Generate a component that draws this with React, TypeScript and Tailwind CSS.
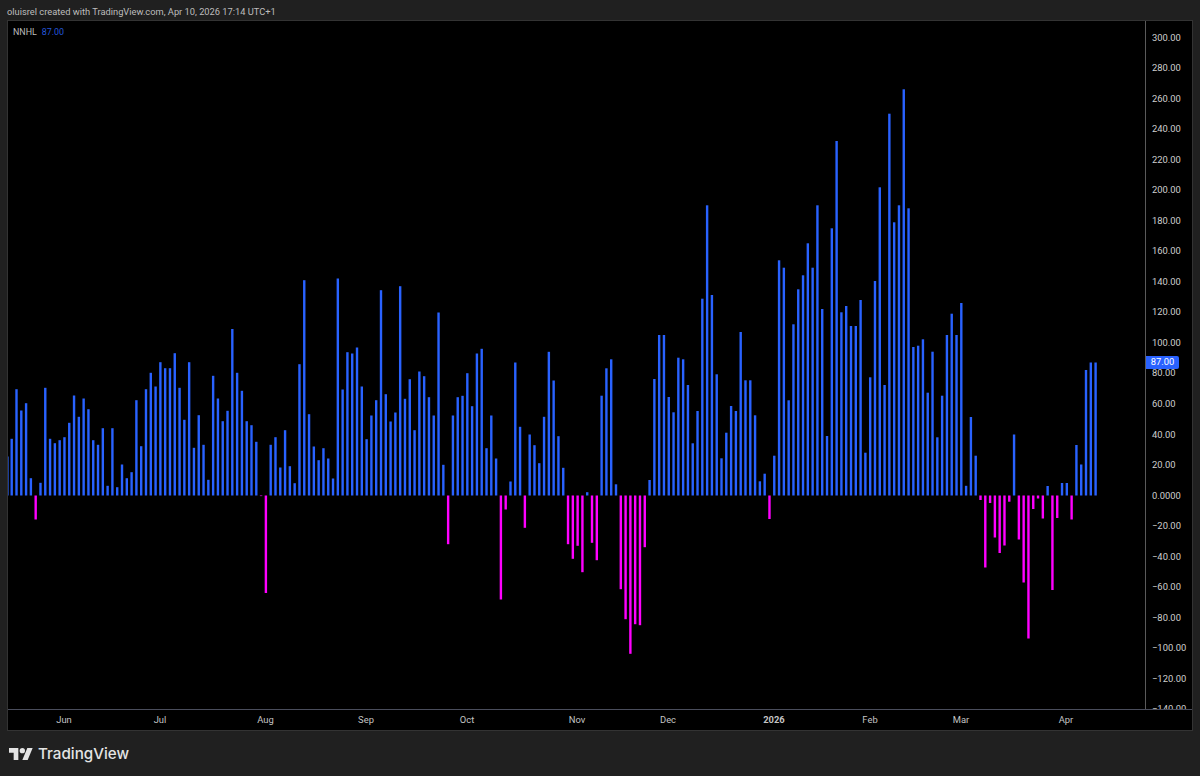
import React from 'react';

// bar heights in px from the zero line, left to right (negative = below zero)
const bars = [
  56.7, 106.3, 85, 92.3, 17.3, -24, 12.7, 107.7, 56.7, 52.3, 55.3, 58.3, 72.7, 100, 78.7, 97, 86.3, 55.3, 50.7, 67.3,
  9.7, 67.3, 8.3, 31, 17.3, 23.3, 95.3, 49.3, 106.3, 122.7, 109, 133.3, 127.3, 127.3, 142.3, 107.7, 75.7, 133.3, 47.7, 80.3,
  50.7, 15.7, 119.7, 97, 74.3, 84.7, 166.5, 122.7, 104.7, 74.3, 70.3, 53.7, -0.6, -97.5, 50.7, 58.3, 28, 65.3, 29.3, 12.3,
  131.3, 215.3, 81.3, 49, 35.3, 47.3, 37, 17, 217, 106, 143.3, 142, 148, 109, 56.3, 80, 95.3, 205.3, 101.3, 74,
  83, 209.3, 96.7, 116.3, 65.3, 124, 119.3, 98.3, 80, 183, 30.7, -48.7, 80, 98.3, 99.7, 122.3, 89.3, 142, 146.7, 47.3,
  80, 37, -104, -14, 14, 133, 68.7, -32.3, 61, 50.3, 32.3, 78.7, 143.7, 115, 59.3, 27.7, -48.7, -63.3, -50.3, -76.7,
  3.3, -47.3, -64.7, 99.8, 127.2, 136.2, 11.2, -93.7, -123.7, -158.3, -128.7, -129.7, -51.7, 15.5, 116.5, 160.5, 160.5, 98.5, 83.2, 137.8,
  136.2, 110.5, 52.2, 84.5, 196.8, 290.2, 200.5, 121.2, 37.2, 62.8, 89.5, 84.5, 163.5, 115.2, 115.2, 80.2, 14.2, 21.8, -23.5, 39.8,
  235.2, 227.8, 95.2, 171.2, 206.2, 220.2, 252.2, 227.8, 290.2, 186.5, 59.5, 267.2, 354.5, 183.2, 189.5, 169.5, 169.5, 195.5, 42.8, 118.2,
  214.5, 308.2, 110.5, 381.8, 273.2, 290.2, 406.2, 287.2, 148.5, 149.8, 156.2, 102.8, 143.8, 58.2, 99.8, 160.5, 181.8, 160.5, 192.5, 9.7,
  78.5, 39.8, -4.5, -72, -7.5, -42, -57.5, -50, -6.2, 61, -44, -87, -143, -13.5, -3, -23, 9.5, -94.5, -22.5, 12.5,
  12.5, -24, 50.5, 31, 125.5, 133, 133,
];

const prices = [
  '300.00', '280.00', '260.00', '240.00', '220.00', '200.00', '180.00', '160.00', '140.00', '120.00', '100.00', '80.00',
  '60.00', '40.00', '20.00', '0.0000', '−20.00', '−40.00', '−60.00', '−80.00', '−100.00', '−120.00', '−140.00',
];

const months = [
  { label: 'Jun', width: 'w-[112px]' },
  { label: 'Jul', width: 'w-[80px]' },
  { label: 'Aug', width: 'w-[131px]' },
  { label: 'Sep', width: 'w-[70px]' },
  { label: 'Oct', width: 'w-[132px]' },
  { label: 'Nov', width: 'w-[88px]' },
  { label: 'Dec', width: 'w-[94px]' },
  { label: '2026', width: 'w-[118px] font-bold' },
  { label: 'Feb', width: 'w-[74px]' },
  { label: 'Mar', width: 'w-[108px]' },
  { label: 'Apr', width: 'w-[102px]' },
];

const ZERO_Y = 495.5;

function Histogram() {
  return (
    <svg viewBox="8 21 1137 688" className="block h-full w-full">
      {/* bar cut off by the left edge of the pane */}
      <rect x={8} y={456.5} width={1} height={39} fill="#2962ff" opacity={0.6} />
      {bars.map((h, i) => (
        <rect
          key={i}
          x={11.7 + i * 4.796 - 1.2}
          y={h > 0 ? ZERO_Y - h : ZERO_Y}
          width={2.4}
          height={Math.abs(h)}
          fill={h > 0 ? '#2962ff' : '#ff00ff'}
        />
      ))}
    </svg>
  );
}

function PriceAxis() {
  return (
    <div className="relative h-full w-[47px] overflow-hidden border-l border-[#5a5a5a] pl-[6px] pt-[1.6px] font-['Roboto',sans-serif] text-[9.4px] text-[#cfcfcf]">
      {prices.map((p) => (
        <div key={p} className="flex h-[30.53px] items-center whitespace-nowrap">
          {p}
        </div>
      ))}
      {/* last value tag */}
      <div className="absolute left-0 top-[335px] flex h-[13px] w-[33px] items-center justify-center rounded-r-[2px] bg-[#2962ff] text-white">
        87.00
      </div>
    </div>
  );
}

function TradingViewLogo() {
  return (
    <svg viewBox="0 4 36 18" className="h-[12px] w-[24px]" fill="#e4e4e4">
      <path d="M14 22H7V11H0V4h14v18zM28 22h-8l7.5-18h8L28 22z" />
      <circle cx="20" cy="8" r="4" />
    </svg>
  );
}

export default function App() {
  return (
    <div className="flex h-[776px] w-[1200px] flex-col overflow-hidden bg-[#202020] font-['Roboto',sans-serif]">
      <div className="flex h-[24px] items-center pl-[7px] text-[9.3px] leading-none text-[#bdbdbd]">
        oluisrel created with TradingView.com, Apr 10, 2026 17:14 UTC+1
      </div>

      <div className="mx-[7px] -mt-[4px] flex h-[711px] flex-col border border-[#333333] bg-black">
        <div className="flex h-[688px]">
          <div className="relative h-full w-[1137px]">
            <Histogram />
            <div className="absolute left-[5px] top-[6px] flex gap-[5px] text-[8.9px] leading-[11px]">
              <span className="text-[#bdbdbd]">NNHL</span>
              <span className="text-[#2456d8]">87.00</span>
            </div>
          </div>
          <PriceAxis />
        </div>

        <div className="flex h-[21px] items-center border-t border-[#4a4d5c] text-[9.4px] text-[#c4c4c4]">
          {months.map((m) => (
            <div key={m.label} className={`${m.width} text-center`}>
              {m.label}
            </div>
          ))}
        </div>
      </div>

      <div className="flex flex-1 items-center gap-[5px] pl-[9px]">
        <TradingViewLogo />
        <span className="font-['Inter',sans-serif] text-[15.2px] font-medium leading-none text-[#e4e4e4]">TradingView</span>
      </div>
    </div>
  );
}
